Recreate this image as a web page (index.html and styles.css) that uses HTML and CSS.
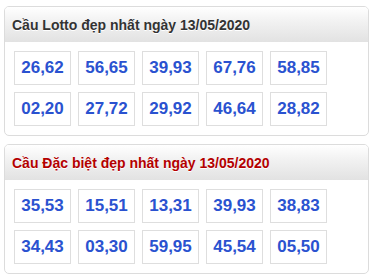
FILE: index.html
```html
<!DOCTYPE html>
<html>
<head>
<meta charset="utf-8">
<link rel="stylesheet" href="styles.css">
</head>
<body>
<div class="card">
  <div class="head">Cầu Lotto đẹp nhất ngày 13/05/2020</div>
  <div class="grid">
    <div class="cell">26,62</div><div class="cell">56,65</div><div class="cell">39,93</div><div class="cell">67,76</div><div class="cell">58,85</div>
    <div class="cell">02,20</div><div class="cell">27,72</div><div class="cell">29,92</div><div class="cell">46,64</div><div class="cell">28,82</div>
  </div>
</div>
<div class="card">
  <div class="head red">Cầu Đặc biệt đẹp nhất ngày 13/05/2020</div>
  <div class="grid">
    <div class="cell">35,53</div><div class="cell">15,51</div><div class="cell">13,31</div><div class="cell">39,93</div><div class="cell">38,83</div>
    <div class="cell">34,43</div><div class="cell">03,30</div><div class="cell">59,95</div><div class="cell">45,54</div><div class="cell">05,50</div>
  </div>
</div>
</body>
</html>
```
FILE: styles.css
```css
html, body { margin: 0; padding: 0; background: #fff; }
body {
  padding: 6px 4px 0 4px;
  font-family: "Liberation Sans", Arial, sans-serif;
  display: flex;
  flex-direction: column;
  gap: 8px;
}
.card {
  width: 363px;
  border: 1px solid #dcdcdc;
  border-radius: 5px;
  overflow: hidden;
  background: #fff;
}
.head {
  height: 35px;
  box-sizing: border-box;
  padding: 0 7px;
  display: flex;
  align-items: center;
  font-size: 14px;
  font-weight: bold;
  color: #333;
  text-shadow: 0 1px 0 #fff;
  background: linear-gradient(to bottom, #ffffff 0%, #f2f2f2 40%, #e2e2e2 100%);
}
.head.red { color: #b40000; }
.grid {
  padding: 9px 9px 9px 9px;
  display: grid;
  grid-template-columns: repeat(5, 57px);
  column-gap: 7px;
  row-gap: 7px;
}
.cell {
  height: 34px;
  box-sizing: border-box;
  border: 1px solid #dedede;
  display: flex;
  align-items: center;
  justify-content: center;
  font-size: 17px;
  font-weight: bold;
  color: #2a52d0;
}
```
